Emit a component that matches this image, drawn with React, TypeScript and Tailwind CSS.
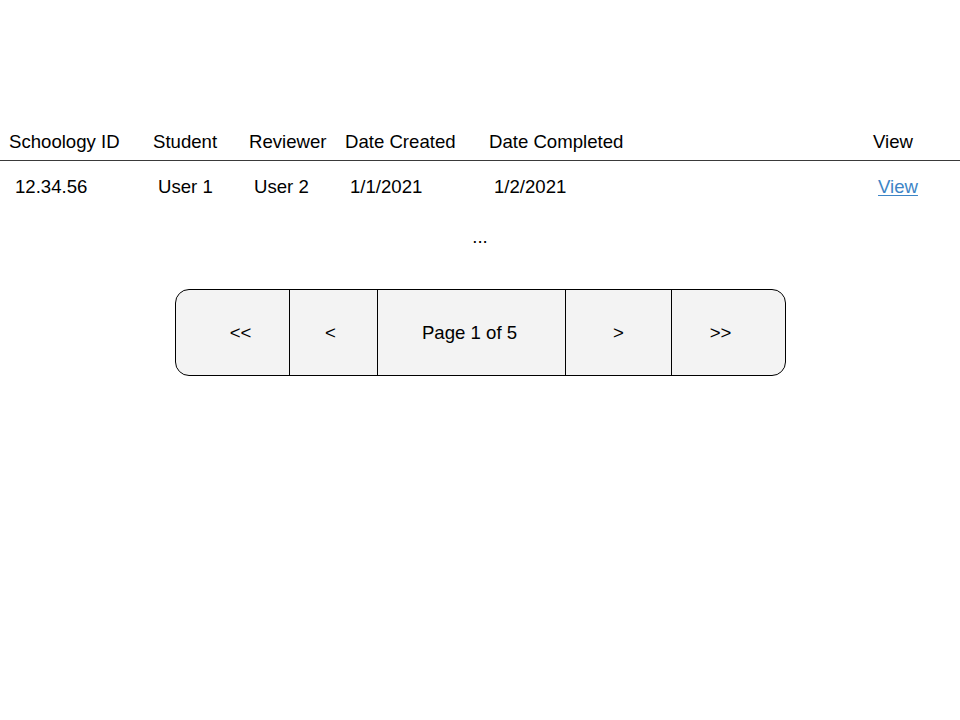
export default function App() {
  const cols = [
    { head: "Schoology ID", cell: "12.34.56", w: "w-[144px]" },
    { head: "Student", cell: "User 1", w: "w-[96px]" },
    { head: "Reviewer", cell: "User 2", w: "w-[96px]" },
    { head: "Date Created", cell: "1/1/2021", w: "w-[144px]" },
    { head: "Date Completed", cell: "1/2/2021", w: "w-[384px]" },
  ];

  return (
    <div
      className="min-h-[720px] w-[960px] bg-white pt-[130px] text-[18.6px] leading-[24px] text-black"
      style={{ fontFamily: '"Liberation Sans", Arial, sans-serif' }}
    >
      {/* Header */}
      <div className="flex h-[31px] border-b border-[#3a3a3a] pl-[9px]">
        {cols.map((c) => (
          <div key={c.head} className={c.w}>
            {c.head}
          </div>
        ))}
        <div>View</div>
      </div>

      {/* Row */}
      <div className="mt-[14px] flex h-[24px] pl-[15px]">
        {cols.map((c, i) => (
          <div key={c.head} className={i === 0 ? "w-[143px]" : c.w}>
            {c.cell}
          </div>
        ))}
        <a href="#" className="text-[#3d85c6] underline underline-offset-2">
          View
        </a>
      </div>

      <div className="mt-[26px] h-[24px] text-center">...</div>

      {/* Pagination */}
      <div className="ml-[175px] mt-[40px] flex h-[87px] w-[611px] overflow-hidden rounded-[14px] border border-black bg-[#f3f3f3]">
        <div className="flex w-[113px] items-center justify-center pl-[16px]">&lt;&lt;</div>
        <div className="flex w-[88px] items-center justify-center border-l border-black pr-[6px]">&lt;</div>
        <div className="flex w-[188px] items-center justify-center border-l border-black pr-[4px]">Page 1 of 5</div>
        <div className="flex w-[106px] items-center justify-center border-l border-black">&gt;</div>
        <div className="flex flex-1 items-center justify-center border-l border-black pr-[16px]">&gt;&gt;</div>
      </div>
    </div>
  );
}
